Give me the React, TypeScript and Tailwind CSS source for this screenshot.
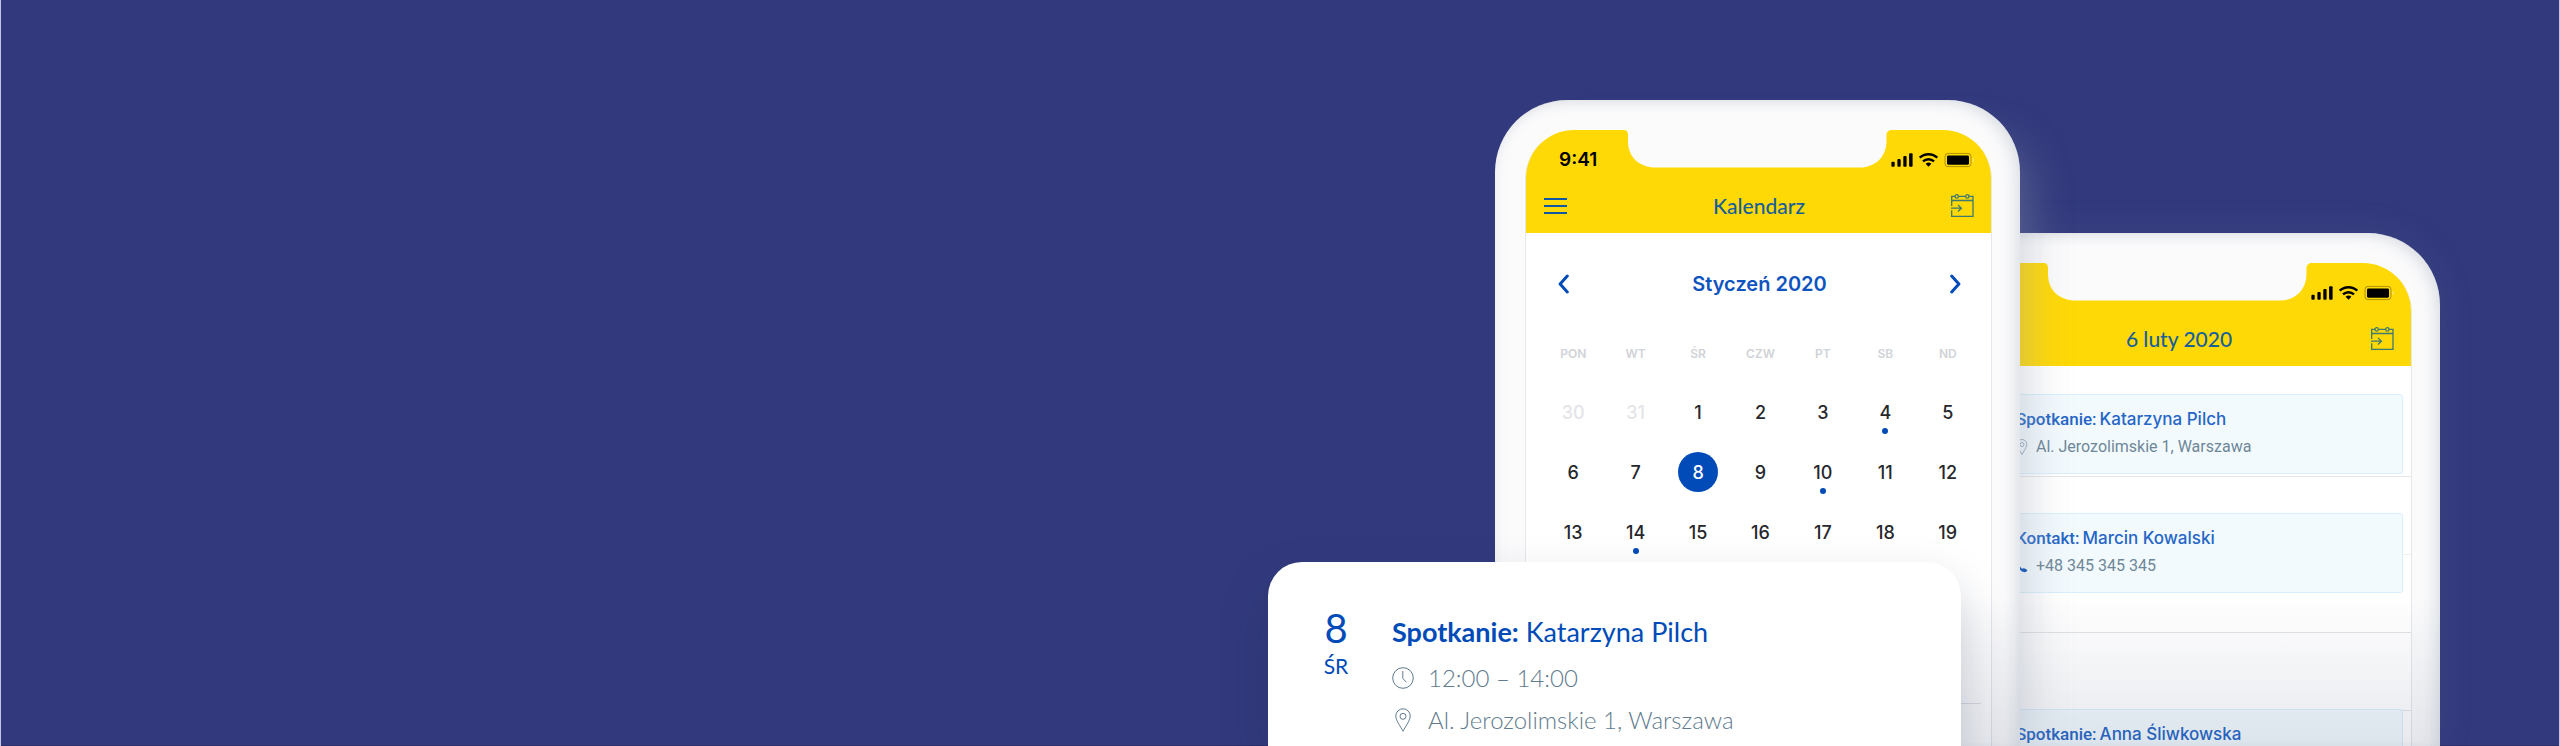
import type { ReactNode } from "react";

type Day = { n: number; muted?: boolean; selected?: boolean; dot?: boolean };

const weekdays = ["PON", "WT", "ŚR", "CZW", "PT", "SB", "ND"];

const weeks: Day[][] = [
  [{ n: 30, muted: true }, { n: 31, muted: true }, { n: 1 }, { n: 2 }, { n: 3 }, { n: 4, dot: true }, { n: 5 }],
  [{ n: 6 }, { n: 7 }, { n: 8, selected: true }, { n: 9 }, { n: 10, dot: true }, { n: 11 }, { n: 12 }],
  [{ n: 13 }, { n: 14, dot: true }, { n: 15 }, { n: 16 }, { n: 17 }, { n: 18 }, { n: 19 }],
];

function StatusIcons() {
  return (
    <svg width="84" height="18" viewBox="0 0 84 18" aria-hidden="true">
      <rect x="1.4" y="10.8" width="3.3" height="5" rx="1" />
      <rect x="7.4" y="8" width="3.3" height="7.8" rx="1" />
      <rect x="13.3" y="5" width="3.3" height="10.8" rx="1" />
      <rect x="19.1" y="2.3" width="3.5" height="13.5" rx="1" />
      <g fill="none" stroke="#000" strokeWidth="2.5">
        <path d="M29.700 6.700a12.900 12.900 0 0 1 17.600 0" />
        <path d="M33 10.400a8 8 0 0 1 11 0" />
      </g>
      <path d="M35.6 12.8a4.2 4.2 0 0 1 5.8 0L38.5 15.8z" />
      <rect x="55" y="2.4" width="26" height="13.2" rx="3" fill="none" stroke="#000" strokeOpacity=".32" />
      <rect x="57" y="4.4" width="22" height="9.3" rx="1.4" />
      <path d="M82.6 7v4.2c.8-.4 1.2-1.200 1.200-2.100s-.4-1.700-1.200-2.100z" fill="#fff" fillOpacity=".5" />
    </svg>
  );
}

function GoToDateIcon() {
  return (
    <svg width="24" height="24" viewBox="0 0 24 24" fill="none" stroke="#3c7a72" strokeWidth="1.3" aria-hidden="true">
      <path d="M1.700 11.900V2.400h3.400M8.400 2.400h7.200M18.900 2.400h4.100v20H1.700v-6.200M1.700 6.500H23" />
      <circle cx="6.700" cy="2.400" r="1.700" />
      <circle cx="17.300" cy="2.400" r="1.700" />
      <path d="M1 14.200h10.300M8 10.900l3.400 3.300L8 17.500" />
    </svg>
  );
}

function PinIcon({ className }: { className: string }) {
  return (
    <svg className={className} viewBox="0 0 16 24" fill="none" stroke="currentColor" strokeWidth="1" aria-hidden="true">
      <path d="M8 23.200C6 19 .8 12.800.8 8a7.200 7.200 0 0 1 14.400 0c0 4.800-5.200 11-7.200 15.200z" />
      <circle cx="8" cy="8.300" r="3" />
    </svg>
  );
}

function ClockIcon() {
  return (
    <svg className="size-[22px]" viewBox="0 0 22 22" fill="none" stroke="currentColor" strokeWidth="1" aria-hidden="true">
      <circle cx="11" cy="11" r="10.300" />
      <path d="M10.800 4v7.400l3.700 4" />
    </svg>
  );
}

function PhoneIcon() {
  return (
    <svg className="h-4 w-3" viewBox="0 0 12 16" aria-hidden="true">
      <path
        d="M.6 2.600C1.200 2 2.200 2.300 2.700 3.100l.9 1.500c.3.500.2 1-.3 1.500-.5.500-.3 1 .7 2.400 1 1.300 1.800 2.300 2.500 2.100.6-.3 1-.6 1.700-.3l2.400 1.100c.7.400.8 1.300.2 1.900-1.200 1.200-3.500 1.200-5.700-.6C1.900 10.100-1.200 4.700.6 2.600z"
        fill="#004bb8"
      />
    </svg>
  );
}

function Chevron({ direction }: { direction: "left" | "right" }) {
  return (
    <svg width="11" height="20" viewBox="0 0 11 20" fill="none" stroke="#004bb8" strokeWidth="3" strokeLinecap="round" strokeLinejoin="round" aria-hidden="true">
      <path d={direction === "left" ? "M9.300 2.100L2.100 10l7.200 7.900" : "M1.700 2.100L8.900 10l-7.200 7.900"} />
    </svg>
  );
}

function Phone({ className, time, left, title, children }: { className: string; time?: string; left?: ReactNode; title: string; children: ReactNode }) {
  return (
    <div className={`relative flex w-[525px] shrink-0 flex-col rounded-t-[72px] bg-[#fbfbfc] pt-[30px] pr-[29px] pl-[31px] ${className}`}>
      <div className="relative flex min-h-0 grow flex-col overflow-hidden rounded-t-[48px] bg-white shadow-[-1px_1px_0_#e4e7ec,1px_1px_0_#e4e7ec]">
        <svg className="absolute top-[-1px] left-[98px]" width="268" height="40" viewBox="0 0 268 40" aria-hidden="true">
          <path d="M0 0H268V1C265 1 262.500 2.500 262.500 6V12C262.500 28 251 38.500 236 38.500H32C15 38.500 4 28 4 12V6C4 2.500 2.500 1 0 1Z" fill="#fbfbfc" />
        </svg>
        <header className="shrink-0 bg-[#ffd905] pt-4 pb-[13px]">
          <div className="flex h-7 items-center justify-between pr-[17px] pl-[33px]">
            <span className="font-[Inter,sans-serif] text-[19px] leading-7 font-semibold text-black">{time}</span>
            <StatusIcons />
          </div>
          <div className="mt-[18px] flex h-7 items-center justify-between pr-[17px] pl-[18px]">
            <div className="flex w-6">{left}</div>
            <h2 className="font-[Lato,sans-serif] text-[21px] leading-7 font-medium text-[#17609a]">{title}</h2>
            <button type="button" aria-label="Wybierz datę">
              <GoToDateIcon />
            </button>
          </div>
        </header>
        {children}
      </div>
      <div className="pointer-events-none absolute inset-0 rounded-t-[72px] bg-linear-to-t from-[#39466b]/12 to-transparent to-[150px] shadow-[inset_-8px_4px_16px_-4px_rgba(130,142,160,0.280),inset_5px_3px_12px_-4px_rgba(130,142,160,0.120)]" />
    </div>
  );
}

function Event({ className, label, name, children }: { className: string; label: string; name: string; children?: ReactNode }) {
  return (
    <article className={`mr-2 ml-[59px] h-20 shrink-0 rounded-[3px] border border-[#d9effc] bg-[#f3fafe] pt-3 pl-[10px] ${className}`}>
      <h3 className="flex gap-[3px] text-[17px] leading-6 text-[#2566c6]">
        <span className="font-[Roboto,sans-serif] font-medium">{label}</span>
        <span className="font-[Inter,sans-serif] font-medium">{name}</span>
      </h3>
      {children && (
        <p className="mt-1 flex items-center gap-2 font-[Roboto,sans-serif] text-[16px] leading-6 text-[#6e8798]">{children}</p>
      )}
    </article>
  );
}

export default function App() {
  return (
    <main className="flex h-screen justify-end overflow-hidden border-x border-[#c3c6e2] bg-[#323a7d] pr-[119px] shadow-[inset_0_-1px_0_#2b3171]">
      <div className="relative z-10 mt-[100px] flex">
        <Phone
          className="shadow-[32px_16px_44px_-24px_rgba(150,158,175,0.400)]"
          time="9:41"
          title="Kalendarz"
          left={
            <button type="button" aria-label="Menu" className="flex flex-col gap-[5px]">
              <span className="h-0.5 w-[23px] bg-[#0e58a6]" />
              <span className="h-0.5 w-[23px] bg-[#0e58a6]" />
              <span className="h-0.5 w-[23px] bg-[#0e58a6]" />
            </button>
          }
        >
          <div className="mt-[37px] flex h-7 items-center justify-between pr-[30px] pl-8">
            <button type="button" aria-label="Poprzedni miesiąc">
              <Chevron direction="left" />
            </button>
            <h3 className="font-[Inter,sans-serif] text-[20px] leading-7 font-semibold text-[#0f54be]">Styczeń 2020</h3>
            <button type="button" aria-label="Następny miesiąc">
              <Chevron direction="right" />
            </button>
          </div>
          <div className="mt-[46px] pr-3 pl-4">
            <table className="w-full table-fixed text-center">
              <thead>
                <tr>
                  {weekdays.map((day) => (
                    <th key={day} className="pb-[18px] font-[Inter,sans-serif] text-[12px] leading-5 font-semibold text-[#d0d3d7]">
                      {day}
                    </th>
                  ))}
                </tr>
              </thead>
              <tbody className="font-[Inter,sans-serif] text-[18px] font-medium text-[#26282b]">
                {weeks.map((week, i) => (
                  <tr key={i}>
                    {week.map((day) => (
                      <td key={day.n} className="h-[60px] p-0">
                        <button type="button" className="relative flex h-[60px] w-full items-center justify-center">
                          <span
                            className={
                              day.selected
                                ? "flex size-10 items-center justify-center rounded-full bg-[#004bb8] text-white"
                                : day.muted
                                  ? "text-[#e3e5e8]"
                                  : ""
                            }
                          >
                            {day.n}
                          </span>
                          {day.dot && <span className="absolute bottom-2 size-1.5 rounded-full bg-[#004bb8]" />}
                        </button>
                      </td>
                    ))}
                  </tr>
                ))}
              </tbody>
            </table>
          </div>
          <div className="mx-[10px] mt-[141px] h-px shrink-0 bg-[#dfe2e8]" />
        </Phone>

        <section className="absolute top-[462px] bottom-0 left-[-227px] z-10 flex w-[693px] gap-8 rounded-t-[34px] bg-white pl-11 shadow-[0_24px_50px_rgba(25,35,75,0.220)]">
          <div className="w-12 pt-[46px] text-center font-[Lato,sans-serif] text-[#004bb8]">
            <p className="text-[40px] leading-10">8</p>
            <p className="mt-1.5 text-[21px] leading-6">ŚR</p>
          </div>
          <div className="pt-[54px] font-[Lato,sans-serif]">
            <h3 className="text-[27px] leading-8 text-[#004bb8]">
              <strong className="font-bold">Spotkanie:</strong> Katarzyna Pilch
            </h3>
            <p className="mt-[14px] flex items-center gap-[14px] text-[24px] leading-8 font-light text-[#5f7b8e]">
              <ClockIcon />
              12:00 – 14:00
            </p>
            <p className="mt-[10px] flex items-center gap-[14px] text-[24px] leading-8 font-light text-[#5f7b8e]">
              <span className="flex w-[22px] justify-center">
                <PinIcon className="h-6 w-4" />
              </span>
              Al. Jerozolimskie 1, Warszawa
            </p>
          </div>
        </section>
      </div>

      <div className="mt-[233px] -ml-[105px] flex">
        <Phone className="shadow-[0_0_40px_rgba(170,180,210,0.080)]" title="6 luty 2020">
          <div className="relative grow">
            <div className="h-[111px] border-b border-[#e4e7ea]" />
            <div className="h-[78px] border-b border-[#eceef2]" />
            <div className="h-[78px] border-b border-[#e1e3e8]" />
            <div className="h-[78px] border-b border-[#e1e3e8]" />
            <div className="absolute inset-0 flex flex-col">
              <Event className="mt-7" label="Spotkanie:" name="Katarzyna Pilch">
                <PinIcon className="h-4 w-3" />
                Al. Jerozolimskie 1, Warszawa
              </Event>
              <Event className="mt-[39px]" label="Kontakt:" name="Marcin Kowalski">
                <PhoneIcon />
                +48 345 345 345
              </Event>
              <Event className="mt-[116px]" label="Spotkanie:" name="Anna Śliwkowska" />
            </div>
          </div>
        </Phone>
      </div>
    </main>
  );
}
